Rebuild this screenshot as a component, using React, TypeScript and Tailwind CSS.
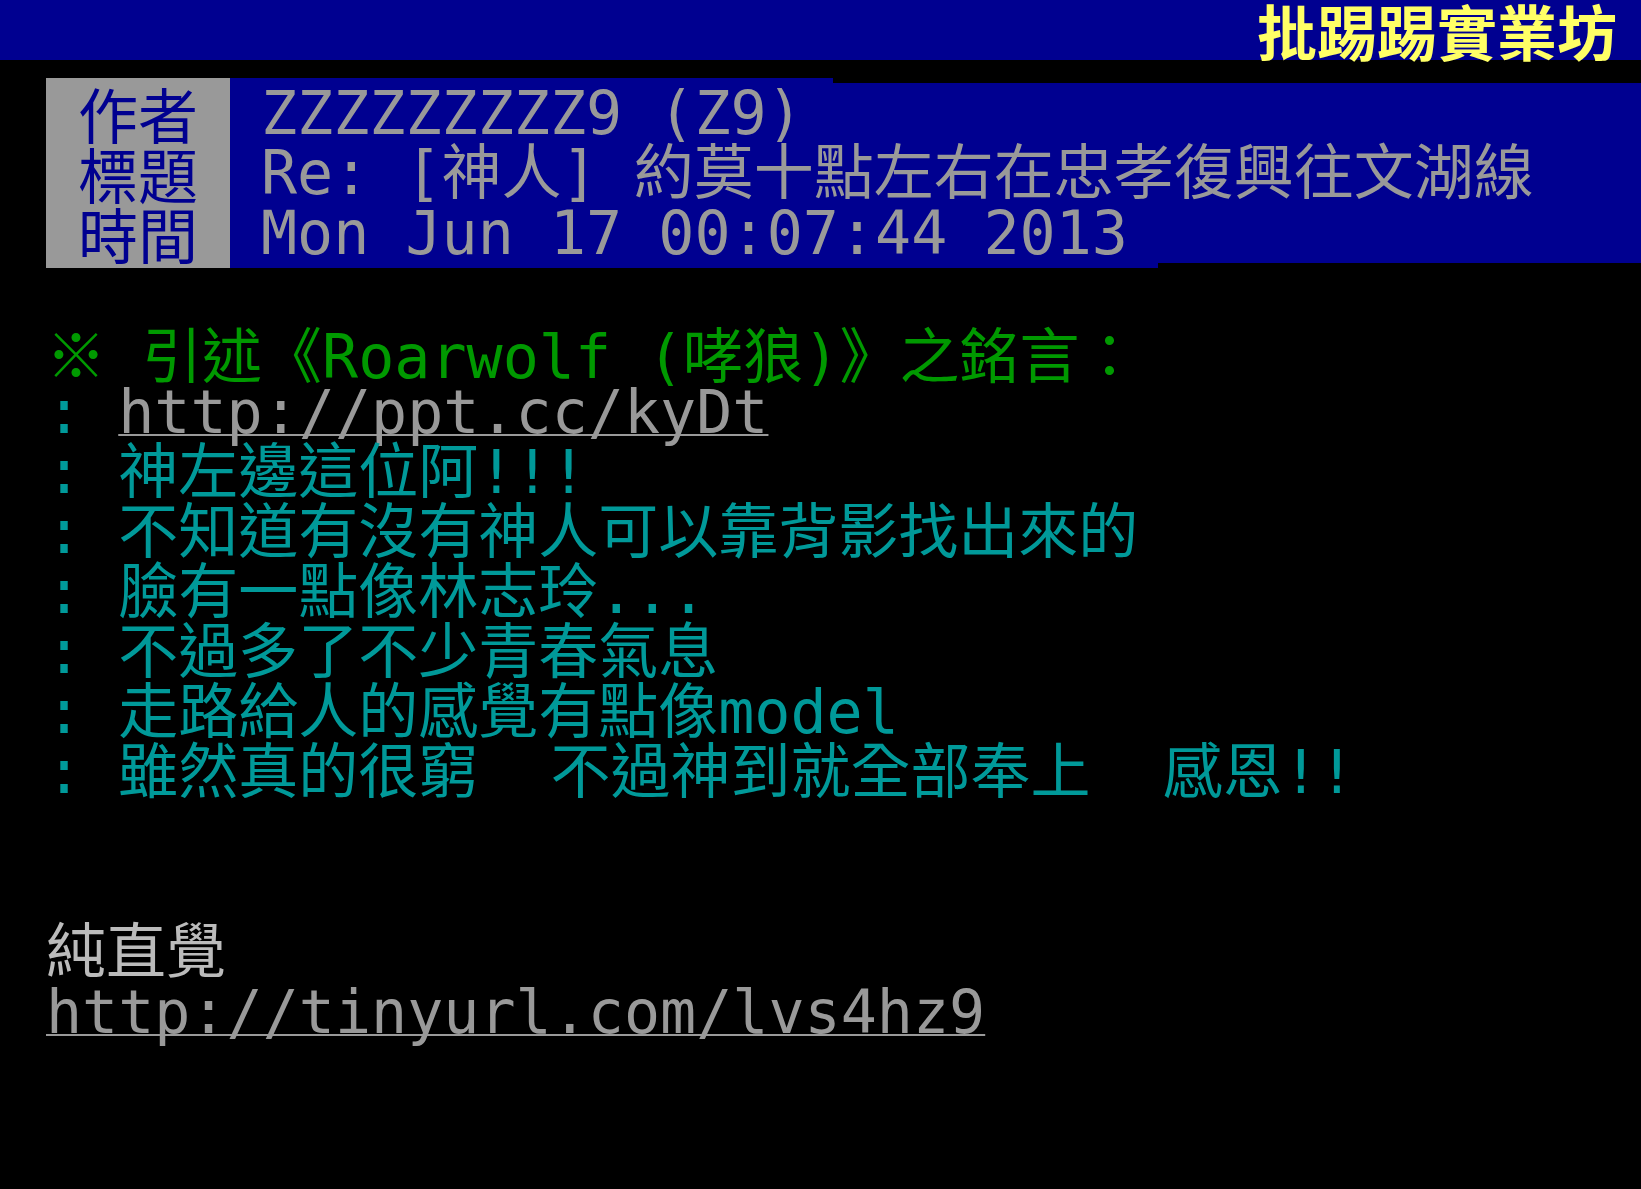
import React from "react";

const mono = "font-['DejaVu_Sans_Mono','Noto_Sans_CJK_TC',monospace]";
const cjk = "font-['Noto_Sans_CJK_TC',sans-serif]";

const quoted = [
  "神左邊這位阿!!!",
  "不知道有沒有神人可以靠背影找出來的",
  "臉有一點像林志玲...",
  "不過多了不少青春氣息",
  "走路給人的感覺有點像model",
  "雖然真的很窮  不過神到就全部奉上  感恩!!",
];

const App = () => {
  return (
    <div className={`min-h-screen bg-black ${mono} text-[60px] leading-[60px] text-[#bbbbbb]`}>
      {/* TOP BAR */}
      <div className="h-[60px] flex justify-end pr-[24px] bg-[#000090]">
        <span className={`${cjk} font-bold text-[#ffff66]`}>批踢踢實業坊</span>
      </div>

      {/* META HEADER */}
      <div className="mt-[18px] ml-[46px] flex">
        <div className={`w-[184px] h-[190px] pt-[5px] flex flex-col items-center bg-[#999999] text-[#000090] ${cjk}`}>
          <span className="h-[60px]">作者</span>
          <span className="h-[60px]">標題</span>
          <span className="h-[60px]">時間</span>
        </div>
        <div className="flex-1 flex flex-col text-[#999999] whitespace-pre">
          <div className="h-[65px] flex">
            <span className="pt-[5px] pl-[31px] pr-[30px] bg-[#000090]">ZZZZZZZZZ9 (Z9)</span>
            <div className="flex-1 mt-[5px] bg-[#000090]" />
          </div>
          <div className="h-[60px] pl-[31px] bg-[#000090]">
            Re: [神人] 約莫十點左右在忠孝復興往文湖線
          </div>
          <div className="h-[65px] flex">
            <span className="h-[65px] pl-[31px] pr-[30px] bg-[#000090]">Mon Jun 17 00:07:44 2013</span>
            <div className="flex-1 mb-[5px] bg-[#000090]" />
          </div>
        </div>
      </div>

      {/* ARTICLE BODY */}
      <div className="mt-[54px] ml-[46px] flex flex-col whitespace-pre">
        <div className="h-[60px] text-[#009900]">
          <span className={cjk}>※</span> 引述《Roarwolf (哮狼)》之銘言：
        </div>
        <div className="h-[60px] text-[#009999]">
          : <span className="text-[#999999] underline decoration-2 [text-decoration-skip-ink:none]">http://ppt.cc/kyDt</span>
        </div>
        {quoted.map((line) => (
          <div key={line} className="h-[60px] text-[#009999]">
            : {line}
          </div>
        ))}
        <div className="h-[60px]" />
        <div className="h-[60px]" />
        <div className="h-[60px]">純直覺</div>
        <div className="h-[60px]">
          <span className="text-[#999999] underline decoration-2 [text-decoration-skip-ink:none]">http://tinyurl.com/lvs4hz9</span>
        </div>
      </div>
    </div>
  );
};

export default App;
